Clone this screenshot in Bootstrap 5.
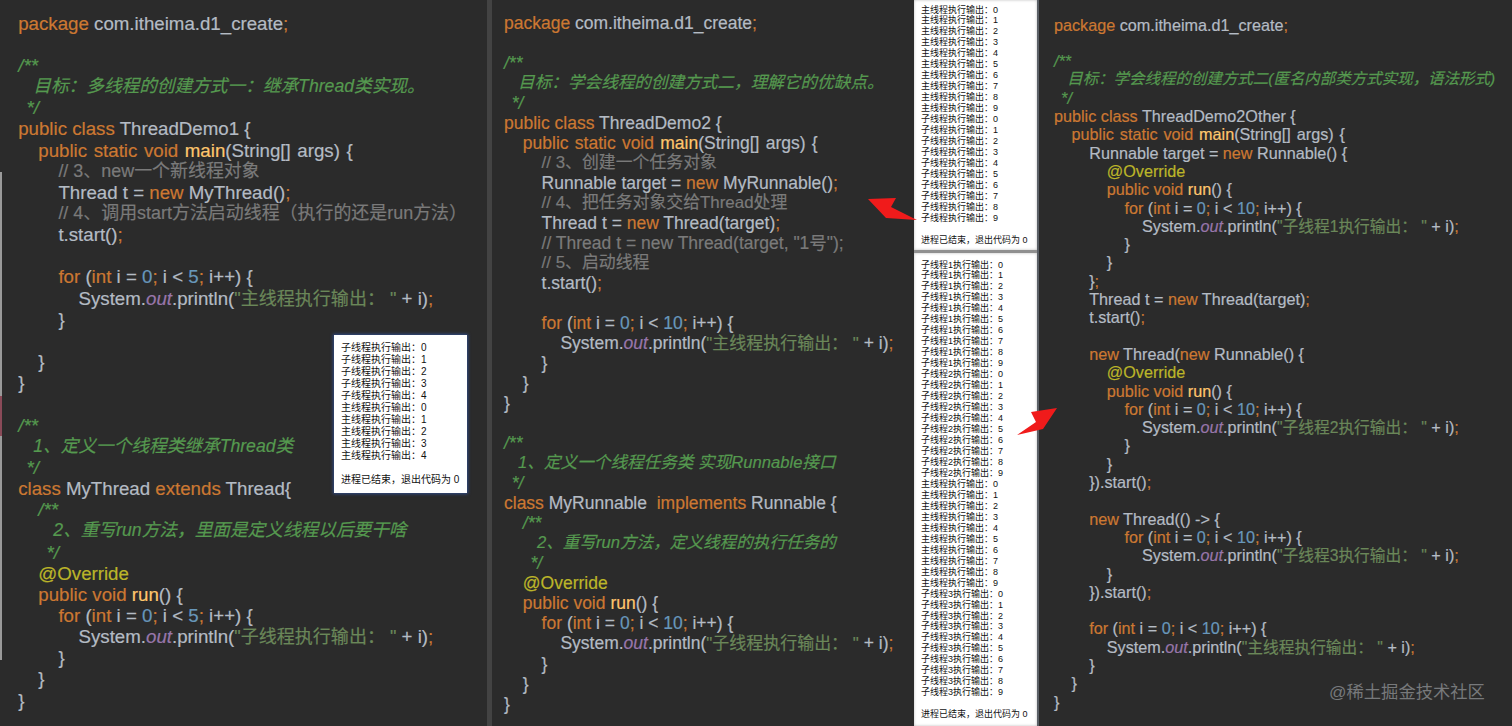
<!DOCTYPE html>
<html lang="zh-CN">
<head>
<meta charset="utf-8">
<title>Java 线程创建方式</title>
<link href="https://cdn.jsdelivr.net/npm/bootstrap@5.3.0/dist/css/bootstrap.min.css" rel="stylesheet">
<style>
html,body{margin:0;height:726px;overflow:hidden;background:#2b2b2b}
.shot{width:1512px;height:726px;font-family:"Liberation Sans","Noto Sans CJK SC",sans-serif;overflow:hidden}
.pane{background:#2b2b2b;color:#b4bbc4;overflow:hidden;flex:none;height:726px;-webkit-text-stroke:.2px}
.pane-a{width:487px;padding:12.6px 0 0 18.2px;font-size:18.7px;line-height:21.16px;--ind:20.1px;--doc:.945em;--cmt:.96em;--str:.965em}
.pane-a::before{content:"";position:absolute;left:0;top:172px;width:1.5px;height:488px;background:linear-gradient(#9a9a9a 0 46%,#8a4a58 46% 54%,#9a9a9a 54%)}
.pane-b{width:427px;padding:13px 0 0 12px;font-size:17.5px;line-height:20.02px;--ind:18.8px;--doc:.95em;--cmt:.965em;--str:.97em;border-left:5px solid #434343}
.pane-c{width:475px;padding:15.6px 0 0 15px;font-size:16.2px;line-height:18.3px;--ind:17.6px;--doc:.955em;--cmt:.96em;--str:.97em;border-left:2px solid #5a5f66}
.ln{display:block;height:1lh;white-space:pre}
.wide{word-spacing:1.4px}
.i1{padding-left:calc(var(--ind)*1)}.i2{padding-left:calc(var(--ind)*2)}.i3{padding-left:calc(var(--ind)*3)}.i4{padding-left:calc(var(--ind)*4)}.i5{padding-left:calc(var(--ind)*5)}
.dtext{padding-left:calc(var(--ind)*.75)}.dtail{padding-left:calc(var(--ind)*.15)}.dtext1{padding-left:calc(var(--ind)*1.75)}.dtail1{padding-left:calc(var(--ind)*1.15)}
.kw{color:#cc7832}.fn{color:#ffc66d}.num{color:#6897bb}.str{color:#6a8759;font-size:var(--str)}.st{color:#9876aa;font-style:italic}.ann{color:#bbb529}
.doc{color:#55994f;font-style:italic}.doc-sz{font-size:var(--doc)}.cmt{color:#7a7a7a}.cmt-sz{font-size:var(--cmt)}
.con-col{width:123px;flex:none;height:726px;background:#8f8f8f;display:flex;flex-direction:column;gap:2.5px}
.con{background:#fff;color:#111;font-size:9px;line-height:10.97px;white-space:pre;padding:4.5px 0 0 7px;box-shadow:inset 0 0 3px #bbb}
.con-top{height:250px}
.con-bot{flex:1;padding-top:7px}
.con-float{left:334px;top:335px;width:133px;height:158px;background:#fff;color:#111;font-size:10px;line-height:12px;white-space:pre;padding:6.5px 0 0 7px;box-shadow:0 0 3px 1px #2f4a86;-webkit-text-stroke:0}
.con-blank{display:block;height:1lh}
.ptr{left:0;top:0;pointer-events:none}
.mark-w{left:1329px;top:680px;font-size:17.3px;line-height:24px;color:#77797b;white-space:pre}
</style>
</head>
<body>
<main class="shot d-flex position-relative">

<section class="pane pane-a position-relative">
<span class="ln"><span class="kw">package</span> com.itheima.d1_create<span class="kw">;</span></span>
<span class="ln"> </span>
<span class="ln doc">/**</span>
<span class="ln doc doc-sz dtext">目标：多线程的创建方式一：继承Thread类实现。</span>
<span class="ln doc dtail"> */</span>
<span class="ln"><span class="kw">public class</span> ThreadDemo1 {</span>
<span class="ln i1 wide"><span class="kw">public static void</span> <span class="fn">main</span>(String[] args) {</span>
<span class="ln i2 cmt cmt-sz">// 3、new一个新线程对象</span>
<span class="ln i2">Thread t = <span class="kw">new</span> MyThread()<span class="kw">;</span></span>
<span class="ln i2 cmt cmt-sz">// 4、调用start方法启动线程（执行的还是run方法）</span>
<span class="ln i2">t.start()<span class="kw">;</span></span>
<span class="ln"> </span>
<span class="ln i2"><span class="kw">for</span> (<span class="kw">int</span> i = <span class="num">0</span><span class="kw">;</span> i &lt; <span class="num">5</span><span class="kw">;</span> i++) {</span>
<span class="ln i3">System.<span class="st">out</span>.println(<span class="str">"主线程执行输出： "</span> + i)<span class="kw">;</span></span>
<span class="ln i2">}</span>
<span class="ln"> </span>
<span class="ln i1">}</span>
<span class="ln">}</span>
<span class="ln"> </span>
<span class="ln doc">/**</span>
<span class="ln doc doc-sz dtext">1、定义一个线程类继承Thread类</span>
<span class="ln doc dtail"> */</span>
<span class="ln"><span class="kw">class</span> MyThread <span class="kw">extends</span> Thread{</span>
<span class="ln i1 doc">/**</span>
<span class="ln doc doc-sz dtext1">2、重写run方法，里面是定义线程以后要干啥</span>
<span class="ln doc dtail1"> */</span>
<span class="ln i1 ann">@Override</span>
<span class="ln i1"><span class="kw">public void</span> <span class="fn">run</span>() {</span>
<span class="ln i2"><span class="kw">for</span> (<span class="kw">int</span> i = <span class="num">0</span><span class="kw">;</span> i &lt; <span class="num">5</span><span class="kw">;</span> i++) {</span>
<span class="ln i3">System.<span class="st">out</span>.println(<span class="str">"子线程执行输出： "</span> + i)<span class="kw">;</span></span>
<span class="ln i2">}</span>
<span class="ln i1">}</span>
<span class="ln">}</span>
<div class="con-float position-absolute"><span class="d-block">子线程执行输出：0</span><span class="d-block">子线程执行输出：1</span><span class="d-block">子线程执行输出：2</span><span class="d-block">子线程执行输出：3</span><span class="d-block">子线程执行输出：4</span><span class="d-block">主线程执行输出：0</span><span class="d-block">主线程执行输出：1</span><span class="d-block">主线程执行输出：2</span><span class="d-block">主线程执行输出：3</span><span class="d-block">主线程执行输出：4</span><span class="con-blank"> </span><span class="d-block">进程已结束，退出代码为 0</span></div>
</section>

<section class="pane pane-b">
<span class="ln"><span class="kw">package</span> com.itheima.d1_create<span class="kw">;</span></span>
<span class="ln"> </span>
<span class="ln doc">/**</span>
<span class="ln doc doc-sz dtext">目标：学会线程的创建方式二，理解它的优缺点。</span>
<span class="ln doc dtail"> */</span>
<span class="ln"><span class="kw">public class</span> ThreadDemo2 {</span>
<span class="ln i1 wide"><span class="kw">public static void</span> <span class="fn">main</span>(String[] args) {</span>
<span class="ln i2 cmt cmt-sz">// 3、创建一个任务对象</span>
<span class="ln i2">Runnable target = <span class="kw">new</span> MyRunnable()<span class="kw">;</span></span>
<span class="ln i2 cmt cmt-sz">// 4、把任务对象交给Thread处理</span>
<span class="ln i2">Thread t = <span class="kw">new</span> Thread(target)<span class="kw">;</span></span>
<span class="ln i2 cmt">// Thread t = new Thread(target, "1号");</span>
<span class="ln i2 cmt cmt-sz">// 5、启动线程</span>
<span class="ln i2">t.start()<span class="kw">;</span></span>
<span class="ln"> </span>
<span class="ln i2"><span class="kw">for</span> (<span class="kw">int</span> i = <span class="num">0</span><span class="kw">;</span> i &lt; <span class="num">10</span><span class="kw">;</span> i++) {</span>
<span class="ln i3">System.<span class="st">out</span>.println(<span class="str">"主线程执行输出： "</span> + i)<span class="kw">;</span></span>
<span class="ln i2">}</span>
<span class="ln i1">}</span>
<span class="ln">}</span>
<span class="ln"> </span>
<span class="ln doc">/**</span>
<span class="ln doc doc-sz dtext">1、定义一个线程任务类 实现Runnable接口</span>
<span class="ln doc dtail"> */</span>
<span class="ln"><span class="kw">class</span> MyRunnable  <span class="kw">implements</span> Runnable {</span>
<span class="ln i1 doc">/**</span>
<span class="ln doc doc-sz dtext1">2、重写run方法，定义线程的执行任务的</span>
<span class="ln doc dtail1"> */</span>
<span class="ln i1 ann">@Override</span>
<span class="ln i1"><span class="kw">public void</span> <span class="fn">run</span>() {</span>
<span class="ln i2"><span class="kw">for</span> (<span class="kw">int</span> i = <span class="num">0</span><span class="kw">;</span> i &lt; <span class="num">10</span><span class="kw">;</span> i++) {</span>
<span class="ln i3">System.<span class="st">out</span>.println(<span class="str">"子线程执行输出： "</span> + i)<span class="kw">;</span></span>
<span class="ln i2">}</span>
<span class="ln i1">}</span>
<span class="ln">}</span>
</section>

<aside class="con-col">
<div class="con con-top"><span class="d-block">主线程执行输出：0</span><span class="d-block">主线程执行输出：1</span><span class="d-block">主线程执行输出：2</span><span class="d-block">主线程执行输出：3</span><span class="d-block">主线程执行输出：4</span><span class="d-block">主线程执行输出：5</span><span class="d-block">主线程执行输出：6</span><span class="d-block">主线程执行输出：7</span><span class="d-block">主线程执行输出：8</span><span class="d-block">主线程执行输出：9</span><span class="d-block">子线程执行输出：0</span><span class="d-block">子线程执行输出：1</span><span class="d-block">子线程执行输出：2</span><span class="d-block">子线程执行输出：3</span><span class="d-block">子线程执行输出：4</span><span class="d-block">子线程执行输出：5</span><span class="d-block">子线程执行输出：6</span><span class="d-block">子线程执行输出：7</span><span class="d-block">子线程执行输出：8</span><span class="d-block">子线程执行输出：9</span><span class="con-blank"> </span><span class="d-block">进程已结束，退出代码为 0</span></div>
<div class="con con-bot"><span class="d-block">子线程1执行输出：0</span><span class="d-block">子线程1执行输出：1</span><span class="d-block">子线程1执行输出：2</span><span class="d-block">子线程1执行输出：3</span><span class="d-block">子线程1执行输出：4</span><span class="d-block">子线程1执行输出：5</span><span class="d-block">子线程1执行输出：6</span><span class="d-block">子线程1执行输出：7</span><span class="d-block">子线程1执行输出：8</span><span class="d-block">子线程1执行输出：9</span><span class="d-block">子线程2执行输出：0</span><span class="d-block">子线程2执行输出：1</span><span class="d-block">子线程2执行输出：2</span><span class="d-block">子线程2执行输出：3</span><span class="d-block">子线程2执行输出：4</span><span class="d-block">子线程2执行输出：5</span><span class="d-block">子线程2执行输出：6</span><span class="d-block">子线程2执行输出：7</span><span class="d-block">子线程2执行输出：8</span><span class="d-block">子线程2执行输出：9</span><span class="d-block">主线程执行输出：0</span><span class="d-block">主线程执行输出：1</span><span class="d-block">主线程执行输出：2</span><span class="d-block">主线程执行输出：3</span><span class="d-block">主线程执行输出：4</span><span class="d-block">主线程执行输出：5</span><span class="d-block">主线程执行输出：6</span><span class="d-block">主线程执行输出：7</span><span class="d-block">主线程执行输出：8</span><span class="d-block">主线程执行输出：9</span><span class="d-block">子线程3执行输出：0</span><span class="d-block">子线程3执行输出：1</span><span class="d-block">子线程3执行输出：2</span><span class="d-block">子线程3执行输出：3</span><span class="d-block">子线程3执行输出：4</span><span class="d-block">子线程3执行输出：5</span><span class="d-block">子线程3执行输出：6</span><span class="d-block">子线程3执行输出：7</span><span class="d-block">子线程3执行输出：8</span><span class="d-block">子线程3执行输出：9</span><span class="con-blank"> </span><span class="d-block">进程已结束，退出代码为 0</span></div>
</aside>

<section class="pane pane-c">
<span class="ln"><span class="kw">package</span> com.itheima.d1_create<span class="kw">;</span></span>
<span class="ln"> </span>
<span class="ln doc">/**</span>
<span class="ln doc doc-sz dtext">目标：学会线程的创建方式二(匿名内部类方式实现，语法形式)</span>
<span class="ln doc dtail"> */</span>
<span class="ln"><span class="kw">public class</span> ThreadDemo2Other {</span>
<span class="ln i1 wide"><span class="kw">public static void</span> <span class="fn">main</span>(String[] args) {</span>
<span class="ln i2">Runnable target = <span class="kw">new</span> Runnable() {</span>
<span class="ln i3 ann">@Override</span>
<span class="ln i3"><span class="kw">public void</span> <span class="fn">run</span>() {</span>
<span class="ln i4"><span class="kw">for</span> (<span class="kw">int</span> i = <span class="num">0</span><span class="kw">;</span> i &lt; <span class="num">10</span><span class="kw">;</span> i++) {</span>
<span class="ln i5">System.<span class="st">out</span>.println(<span class="str">"子线程1执行输出： "</span> + i)<span class="kw">;</span></span>
<span class="ln i4">}</span>
<span class="ln i3">}</span>
<span class="ln i2">}<span class="kw">;</span></span>
<span class="ln i2">Thread t = <span class="kw">new</span> Thread(target)<span class="kw">;</span></span>
<span class="ln i2">t.start()<span class="kw">;</span></span>
<span class="ln"> </span>
<span class="ln i2"><span class="kw">new</span> Thread(<span class="kw">new</span> Runnable() {</span>
<span class="ln i3 ann">@Override</span>
<span class="ln i3"><span class="kw">public void</span> <span class="fn">run</span>() {</span>
<span class="ln i4"><span class="kw">for</span> (<span class="kw">int</span> i = <span class="num">0</span><span class="kw">;</span> i &lt; <span class="num">10</span><span class="kw">;</span> i++) {</span>
<span class="ln i5">System.<span class="st">out</span>.println(<span class="str">"子线程2执行输出： "</span> + i)<span class="kw">;</span></span>
<span class="ln i4">}</span>
<span class="ln i3">}</span>
<span class="ln i2">}).start()<span class="kw">;</span></span>
<span class="ln"> </span>
<span class="ln i2"><span class="kw">new</span> Thread(() -&gt; {</span>
<span class="ln i4"><span class="kw">for</span> (<span class="kw">int</span> i = <span class="num">0</span><span class="kw">;</span> i &lt; <span class="num">10</span><span class="kw">;</span> i++) {</span>
<span class="ln i5">System.<span class="st">out</span>.println(<span class="str">"子线程3执行输出： "</span> + i)<span class="kw">;</span></span>
<span class="ln i3">}</span>
<span class="ln i2">}).start()<span class="kw">;</span></span>
<span class="ln"> </span>
<span class="ln i2"><span class="kw">for</span> (<span class="kw">int</span> i = <span class="num">0</span><span class="kw">;</span> i &lt; <span class="num">10</span><span class="kw">;</span> i++) {</span>
<span class="ln i3">System.<span class="st">out</span>.println(<span class="str">"主线程执行输出： "</span> + i)<span class="kw">;</span></span>
<span class="ln i2">}</span>
<span class="ln i1">}</span>
<span class="ln">}</span>
</section>

<svg class="ptr position-absolute" width="1512" height="726" viewBox="0 0 1512 726" aria-hidden="true">
<polygon points="868,199 896,198 891,207 917,220 886,218" fill="#f01b1b"/>
<polygon points="1057,408 1031,412 1036,422 1017,435 1043,429" fill="#f01b1b"/>
</svg>
<div class="mark-w position-absolute">@稀土掘金技术社区</div>
</main>
</body>
</html>
